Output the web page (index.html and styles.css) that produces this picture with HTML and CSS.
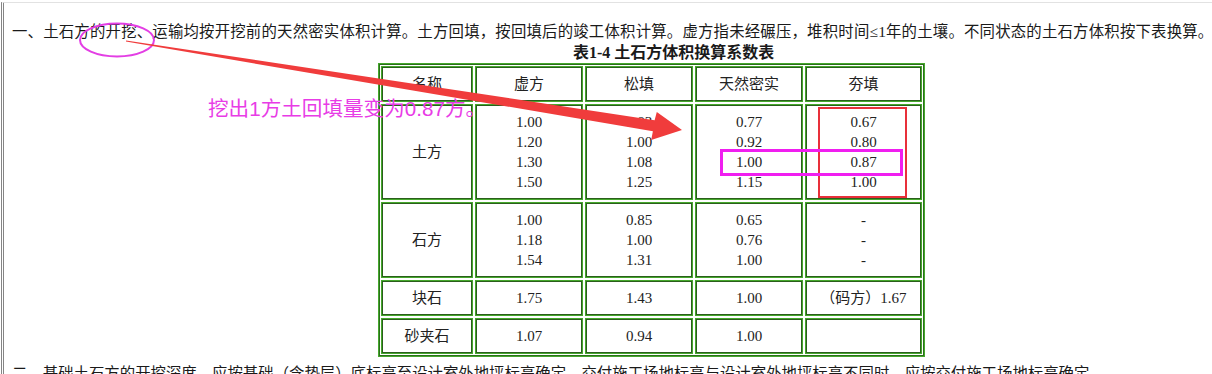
FILE: index.html
```html
<!DOCTYPE html>
<html lang="zh">
<head>
<meta charset="utf-8">
<title>土石方体积换算系数表</title>
<link rel="stylesheet" href="styles.css">
</head>
<body>
<div class="page">
  <p class="para first">一、土石方的开挖、运输均按开挖前的天然密实体积计算。土方回填，按回填后的竣工体积计算。虚方指未经碾压，堆积时间≤1年的土壤。不同状态的土石方体积按下表换算。</p>
  <p class="caption">表1-4 土石方体积换算系数表</p>
  <table class="coef">
    <colgroup>
      <col class="c1"><col class="c2"><col class="c3"><col class="c4"><col class="c5">
    </colgroup>
    <tr><td>名称</td><td>虚方</td><td>松填</td><td>天然密实</td><td>夯填</td></tr>
    <tr><td>土方</td><td>1.00<br>1.20<br>1.30<br>1.50</td><td>0.83<br>1.00<br>1.08<br>1.25</td><td>0.77<br>0.92<br>1.00<br>1.15</td><td>0.67<br>0.80<br>0.87<br>1.00</td></tr>
    <tr><td>石方</td><td>1.00<br>1.18<br>1.54</td><td>0.85<br>1.00<br>1.31</td><td>0.65<br>0.76<br>1.00</td><td>-<br>-<br>-</td></tr>
    <tr><td>块石</td><td>1.75</td><td>1.43</td><td>1.00</td><td>（码方）1.67</td></tr>
    <tr><td>砂夹石</td><td>1.07</td><td>0.94</td><td>1.00</td><td></td></tr>
  </table>
  <p class="para">二、基础土石方的开挖深度，应按基础（含垫层）底标高至设计室外地坪标高确定。交付施工场地标高与设计室外地坪标高不同时，应按交付施工场地标高确定。</p>

  <div class="note">挖出1方土回填量变为0.87方。</div>
  <svg class="marks" width="1212" height="374" viewBox="0 0 1212 374">
    <ellipse cx="117" cy="40" rx="37" ry="16.5" fill="none" stroke="#e33ee4" stroke-width="2"/>
    <polygon fill="#f03c3c" points="125.9,41.6 652.9,131.2 651.2,140.1 682,130 656.8,112.0 654.6,120.2 126.1,40.4"/>
    <rect x="819" y="108" width="87" height="89" fill="none" stroke="#e8303a" stroke-width="2"/>
    <rect x="721.5" y="150.5" width="180" height="24" fill="none" stroke="#f01ef0" stroke-width="3"/>
  </svg>
</div>
</body>
</html>
```

FILE: styles.css
```css
html, body {
  margin: 0;
  padding: 0;
  background: #ffffff;
}

body {
  width: 1212px;
  height: 374px;
  overflow: hidden;
}

.page {
  position: relative;
  height: 372px;
  margin-left: 1px;
  margin-top: 2px;
  border-left: 3px double #858585;
  border-top: 1px solid #e2e2e2;
  padding-top: 19px;
  box-sizing: border-box;
  color: #1a1a1a;
  font-family: "Liberation Serif", "Noto Sans CJK SC", serif;
}

.para {
  margin: 0;
  padding-left: 8px;
  font-size: 15.4px;
  line-height: 20px;
  white-space: nowrap;
}

.first {
  letter-spacing: 0.2px;
}

.caption {
  margin: 1px 0 0 0;
  padding-left: 569px;
  font-size: 16px;
  line-height: 20px;
  font-weight: bold;
  white-space: nowrap;
}

.coef {
  margin: 0 0 7px 374px;
  width: 547px;
  table-layout: fixed;
  border-collapse: separate;
  border-spacing: 2px;
  border: 1px solid #45a82c;
  box-shadow: inset 0 0 0 1px #2c6e1c;
  font-size: 15px;
  line-height: 20px;
  color: #222222;
}

.c1 { width: 92px; }
.c2 { width: 108px; }
.c3 { width: 108px; }
.c4 { width: 108px; }
.c5 { width: 117px; }

.coef td {
  border: 1px solid #45a82c;
  box-shadow: inset 0 0 0 1px #2a5e1c;
  padding: 7px 2px;
  text-align: center;
  vertical-align: middle;
  white-space: nowrap;
}

.note {
  position: absolute;
  left: 204px;
  top: 94px;
  font-family: "Liberation Sans", "Noto Sans CJK SC", sans-serif;
  font-size: 20.6px;
  line-height: 24px;
  color: #e83ce6;
  white-space: nowrap;
}

.marks {
  position: absolute;
  left: -4px;
  top: -3px;
  pointer-events: none;
}
```
